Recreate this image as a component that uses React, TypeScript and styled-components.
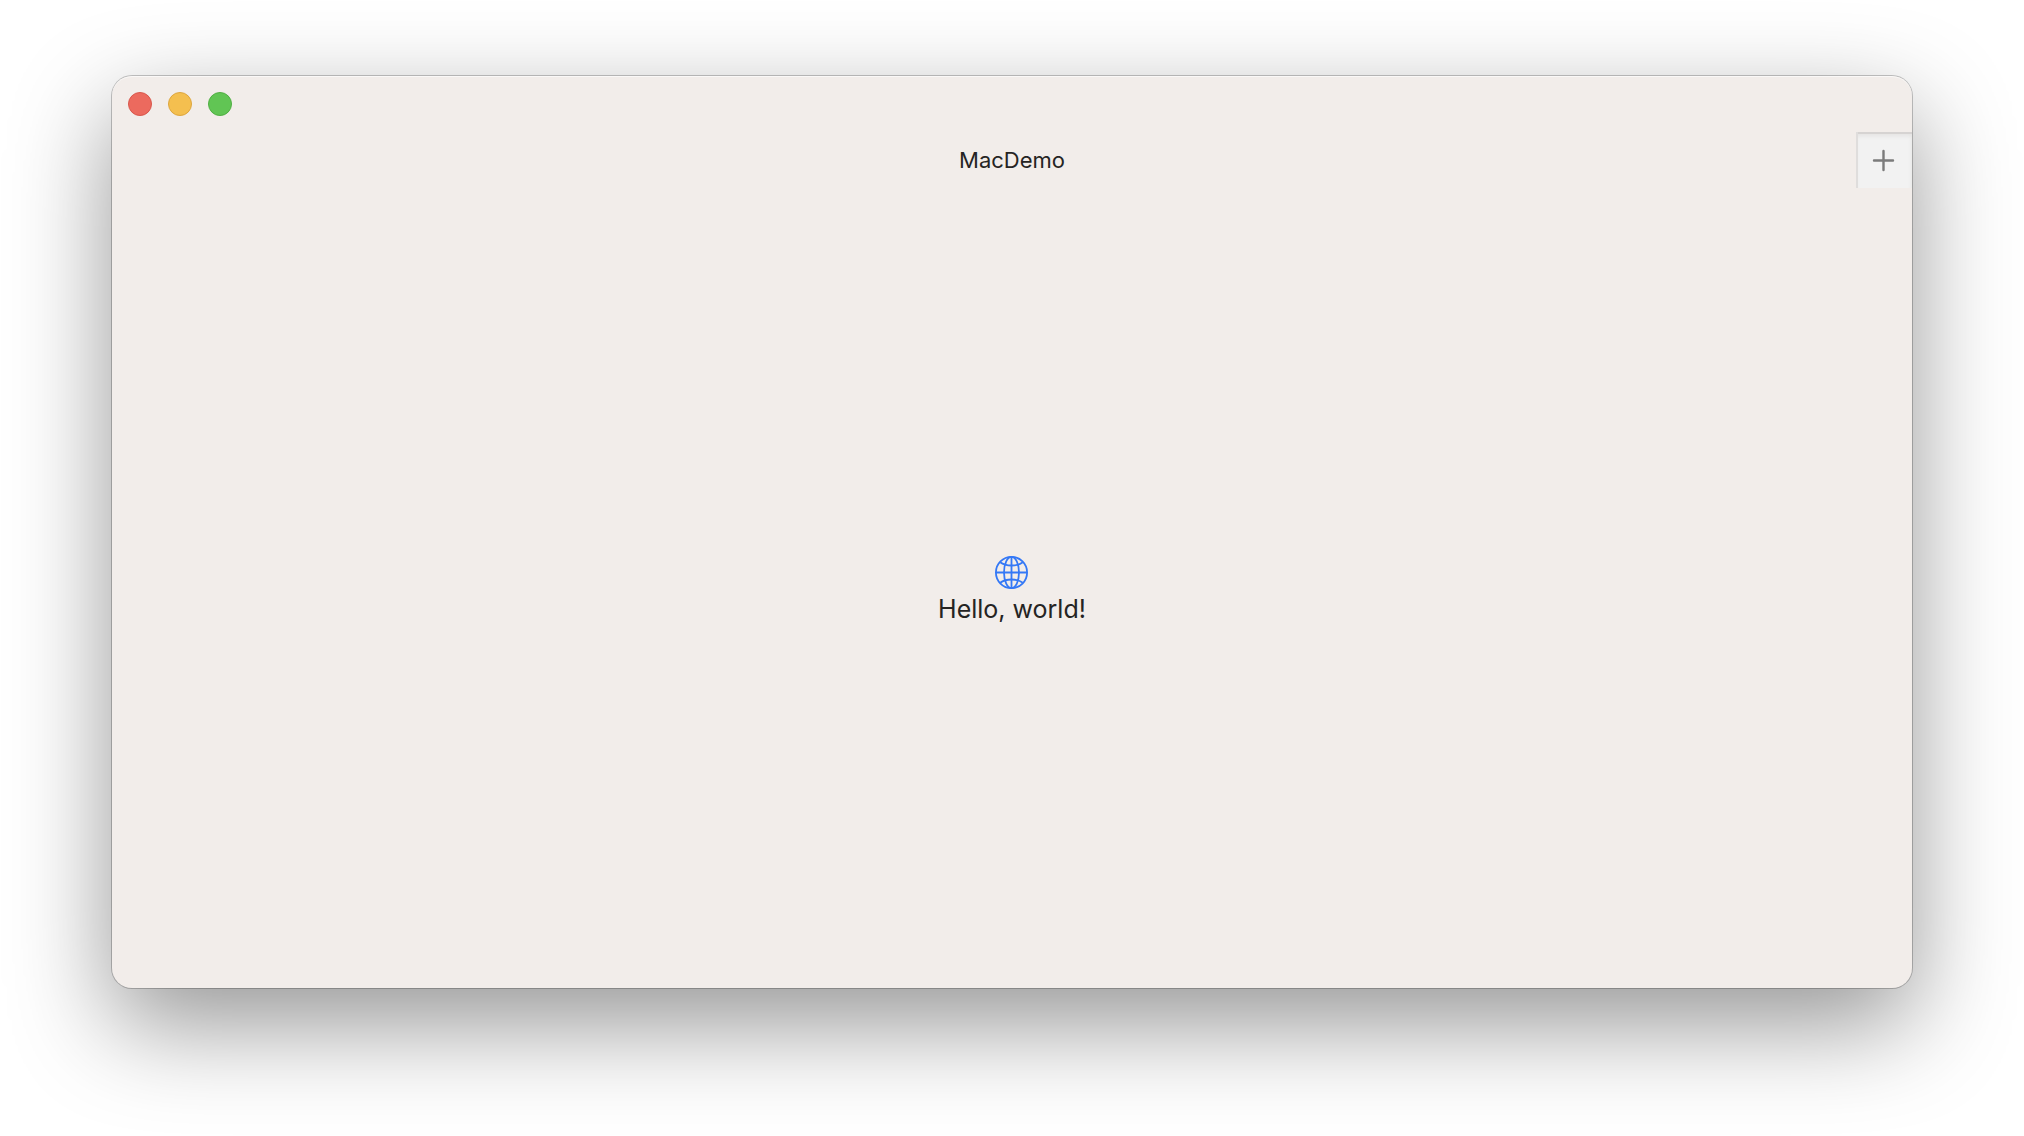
import React from "react";
import styled, { createGlobalStyle } from "styled-components";

const GlobalStyle = createGlobalStyle`
  *, *::before, *::after { box-sizing: border-box; }
  body {
    margin: 0;
    background: #ffffff;
    color: #252423;
    font-family: Inter, "Liberation Sans", sans-serif;
  }
`;

const Desktop = styled.div`
  display: flex;
  min-height: 100vh;
  padding: 76px 112px 148px;
  overflow: hidden;
`;

const Window = styled.main`
  display: flex;
  flex: 1;
  flex-direction: column;
  border-radius: 20px;
  background: #f2edea;
  box-shadow:
    inset 0 1px 0 rgba(255, 255, 255, 0.6),
    0 0 0 1px rgba(0, 0, 0, 0.22),
    0 36px 100px rgba(0, 0, 0, 0.42);
`;

const TitleBar = styled.header`
  display: flex;
  align-items: center;
  gap: 16px;
  height: 56px;
  padding: 0 16px;
`;

const WindowControl = styled.button<{ $fill: string; $edge: string }>`
  width: 24px;
  height: 24px;
  padding: 0;
  border: 1px solid ${(p) => p.$edge};
  border-radius: 50%;
  background: ${(p) => p.$fill};
`;

const TabBar = styled.nav`
  display: grid;
  grid-template-columns: 56px 1fr 56px;
  height: 56px;
`;

const TabTitle = styled.h1`
  grid-column: 2;
  align-self: center;
  margin: 0;
  font-size: 22px;
  font-weight: 400;
  line-height: 28px;
  text-align: center;
`;

const NewTabButton = styled.button`
  display: flex;
  align-items: center;
  justify-content: center;
  padding: 0;
  border: 0;
  background: #f2f2f2;
  box-shadow:
    inset 2px 0 0 #dfdddc,
    inset 0 2px 0 #d6d3d2,
    inset 0 4px 4px #e4e3e2;
  color: #7b7b7b;
`;

const Content = styled.section`
  display: flex;
  flex: 1;
  flex-direction: column;
  align-items: center;
  justify-content: center;
`;

const Greeting = styled.p`
  margin: 0;
  font-size: 25px;
  line-height: 32px;
`;

const controls = [
  { label: "Close", fill: "#ec6a5e", edge: "#d9574c" },
  { label: "Minimize", fill: "#f4bf4f", edge: "#dea63e" },
  { label: "Zoom", fill: "#61c554", edge: "#50af43" },
];

const PlusIcon = () => (
  <svg width="24" height="24" viewBox="0 0 24 24" fill="none" stroke="currentColor" strokeWidth="2.400" strokeLinecap="round" aria-hidden="true">
    <path d="M11.500 3v19M2 12.500h19" />
  </svg>
);

const GlobeIcon = () => (
  <svg width="40" height="42" viewBox="0 0 40 42" fill="none" stroke="#3478f6" strokeWidth="1.800" aria-hidden="true">
    <circle cx="19.500" cy="21.500" r="15.600" />
    <ellipse cx="19.500" cy="21.500" rx="7.500" ry="15.600" />
    <path d="M19.500 6v31M4 21.500h31" />
    <path d="M8.200 11.200c3 2.300 7 3.300 11.300 3.300s8.300-1 11.300-3.300M8.200 31.800c3-2.300 7-3.300 11.300-3.300s8.300 1 11.300 3.300" />
  </svg>
);

export default function App() {
  return (
    <>
      <GlobalStyle />
      <Desktop>
        <Window>
          <TitleBar>
            {controls.map((c) => (
              <WindowControl key={c.label} type="button" aria-label={c.label} $fill={c.fill} $edge={c.edge} />
            ))}
          </TitleBar>
          <TabBar>
            <TabTitle>MacDemo</TabTitle>
            <NewTabButton type="button" aria-label="New tab">
              <PlusIcon />
            </NewTabButton>
          </TabBar>
          <Content>
            <GlobeIcon />
            <Greeting>Hello, world!</Greeting>
          </Content>
        </Window>
      </Desktop>
    </>
  );
}
